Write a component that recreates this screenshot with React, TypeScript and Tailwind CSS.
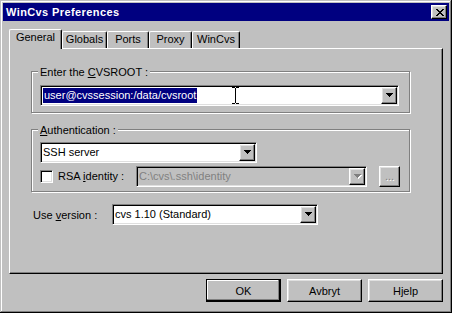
import type { ReactNode } from "react"

// classic 3d edges
const raised =
  "border border-t-white border-l-white border-r-black border-b-black shadow-[inset_-1px_-1px_#808080,inset_1px_1px_#dfdfdf]"
const sunken =
  "border border-t-[#808080] border-l-[#808080] border-r-white border-b-white shadow-[inset_1px_1px_#000,inset_-1px_-1px_#dfdfdf]"
const etched = "border border-[#808080] shadow-[inset_1px_1px_#fff,1px_1px_#fff]"

function Arrow({ disabled }: { disabled?: boolean }) {
  return (
    <svg width="8" height="5" viewBox="0 0 8 5" className="block" shapeRendering="crispEdges">
      {disabled && <path d="M1 1h7v1H1zM2 2h5v1H2zM3 3h3v1H3zM4 4h1v1H4z" fill="#fff" />}
      <path d="M0 0h7v1H0zM1 1h5v1H1zM2 2h3v1H2zM3 3h1v1H3z" fill={disabled ? "#808080" : "#000"} />
    </svg>
  )
}

function Combo({ className, disabled, children }: { className: string; disabled?: boolean; children: ReactNode }) {
  return (
    <div className={`${sunken} ${className} flex h-[21px] p-px ${disabled ? "bg-[#c0c0c0]" : "bg-white"}`}>
      <div className={`flex-1 min-w-0 overflow-hidden whitespace-nowrap pl-px pt-px leading-[15px] ${disabled ? "text-[#808080]" : ""}`}>
        {children}
      </div>
      <div className={`${raised} w-4 h-full bg-[#c0c0c0] flex items-center justify-center pl-px`}>
        <Arrow disabled={disabled} />
      </div>
    </div>
  )
}

function Group({ label, className, children }: { label: ReactNode; className: string; children: ReactNode }) {
  return (
    <div className={`${etched} ${className} relative`}>
      <span className="absolute -top-[6px] left-[6px] bg-[#c0c0c0] px-[2px] leading-[13px]">{label}</span>
      {children}
    </div>
  )
}

function Button({ children, isDefault }: { children: ReactNode; isDefault?: boolean }) {
  return (
    <div
      className={`w-[75px] h-[23px] flex items-center justify-center pt-px leading-[13px] ${
        isDefault
          ? "border border-black shadow-[inset_-1px_-1px_#000,inset_-2px_-2px_#808080,inset_1px_1px_#fff]"
          : raised
      }`}
    >
      {children}
    </div>
  )
}

const tabs = [
  { name: "Globals", w: "w-[45px]" },
  { name: "Ports", w: "w-[42px]" },
  { name: "Proxy", w: "w-[43px]" },
  { name: "WinCvs", w: "w-[48px]" },
]

export default function App() {
  return (
    <div className="w-[452px] h-[313px] bg-[#c0c0c0] p-[3px] flex flex-col font-['Liberation_Sans',Arial,sans-serif] text-[11px] text-black shadow-[inset_-1px_-1px_#000,inset_1px_1px_#c0c0c0,inset_-2px_-2px_#808080,inset_2px_2px_#fff]">
      {/* Title bar */}
      <div className="h-[18px] bg-[#000080] flex items-center justify-between pl-[3px] pr-[2px]">
        <span className="font-bold text-white leading-[18px] tracking-[0.4px]">WinCvs Preferences</span>
        <div className={`${raised} w-4 h-[14px] bg-[#c0c0c0] flex items-center justify-center pl-px`}>
          <svg width="8" height="7" viewBox="0 0 8 7" shapeRendering="crispEdges" className="block">
            <path
              d="M0 0h2v1H0zM6 0h2v1H6zM1 1h2v1H1zM5 1h2v1H5zM2 2h4v1H2zM3 3h2v1H3zM2 4h4v1H2zM1 5h2v1H1zM5 5h2v1H5zM0 6h2v1H0zM6 6h2v1H6z"
              fill="#000"
            />
          </svg>
        </div>
      </div>

      {/* Tab control */}
      <div className="mt-[8px] mx-[6px] flex flex-col">
        <div className="flex items-end h-[19px]">
          <div className="relative z-10 -mb-px h-[20px] w-[53px] bg-[#c0c0c0] border-l border-t border-white border-r border-r-black rounded-tl-[2px] rounded-tr-[2px] shadow-[inset_-1px_0_#808080] flex justify-center pt-px leading-[13px]">
            General
          </div>
          {tabs.map((t) => (
            <div
              key={t.name}
              className={`${t.w} h-[17px] border-l border-t border-white border-r border-r-black rounded-tl-[2px] rounded-tr-[2px] shadow-[inset_-1px_0_#808080] flex justify-center pt-px leading-[13px]`}
            >
              {t.name}
            </div>
          ))}
        </div>

        <div className="h-[226px] border-l border-t border-white border-r border-b border-r-black border-b-black shadow-[inset_-1px_-1px_#808080] pl-[21px] pt-[22px] flex flex-col">
          <Group
            className="w-[379px] h-[42px] pl-[8px] pt-[13px]"
            label={
              <>
                Enter the <span className="underline">C</span>VSROOT :
              </>
            }
          >
            <Combo className="w-[359px]">
              <span className="inline-block h-[15px] bg-[#000080] text-white px-px">user@cvssession:/data/cvsroot</span>
            </Combo>
            {/* text cursor */}
            <svg
              width="7"
              height="17"
              viewBox="0 0 7 17"
              shapeRendering="crispEdges"
              className="absolute left-[200px] top-[15px]"
            >
              <path d="M0 0h3v1H0zM4 0h3v1H4zM3 1h1v15H3zM0 16h3v1H0zM4 16h3v1H4z" fill="#000" />
            </svg>
          </Group>

          <Group
            className="mt-[16px] w-[379px] h-[63px] pl-[8px] pt-[12px]"
            label={
              <>
                <span className="underline">A</span>uthentication :
              </>
            }
          >
            <Combo className="w-[217px]">SSH server</Combo>
            <div className="mt-[3px] flex items-center">
              <div className="w-[96px] flex items-center">
                <div className={`${sunken} w-[13px] h-[13px] bg-white`} />
                <span className="ml-[5px] leading-[13px]">
                  RSA <span className="underline">i</span>dentity :
                </span>
              </div>
              <Combo className="w-[231px]" disabled>
                C:\cvs\.ssh\identity
              </Combo>
              <div className={`${raised} ml-[12px] w-[21px] h-[21px] flex items-center justify-center text-[#808080] [text-shadow:1px_1px_#fff] leading-[13px]`}>
                ...
              </div>
            </div>
          </Group>

          <div className="mt-[12px] flex items-center">
            <span className="w-[81px] pl-[2px] pt-[2px] leading-[13px]">
              Use <span className="underline">v</span>ersion :
            </span>
            <Combo className="w-[206px]">cvs 1.10 (Standard)</Combo>
          </div>
        </div>
      </div>

      {/* Buttons */}
      <div className="mt-[5px] mx-[6px] flex justify-end gap-[6px]">
        <Button isDefault>OK</Button>
        <Button>Avbryt</Button>
        <Button>Hjelp</Button>
      </div>
    </div>
  )
}
